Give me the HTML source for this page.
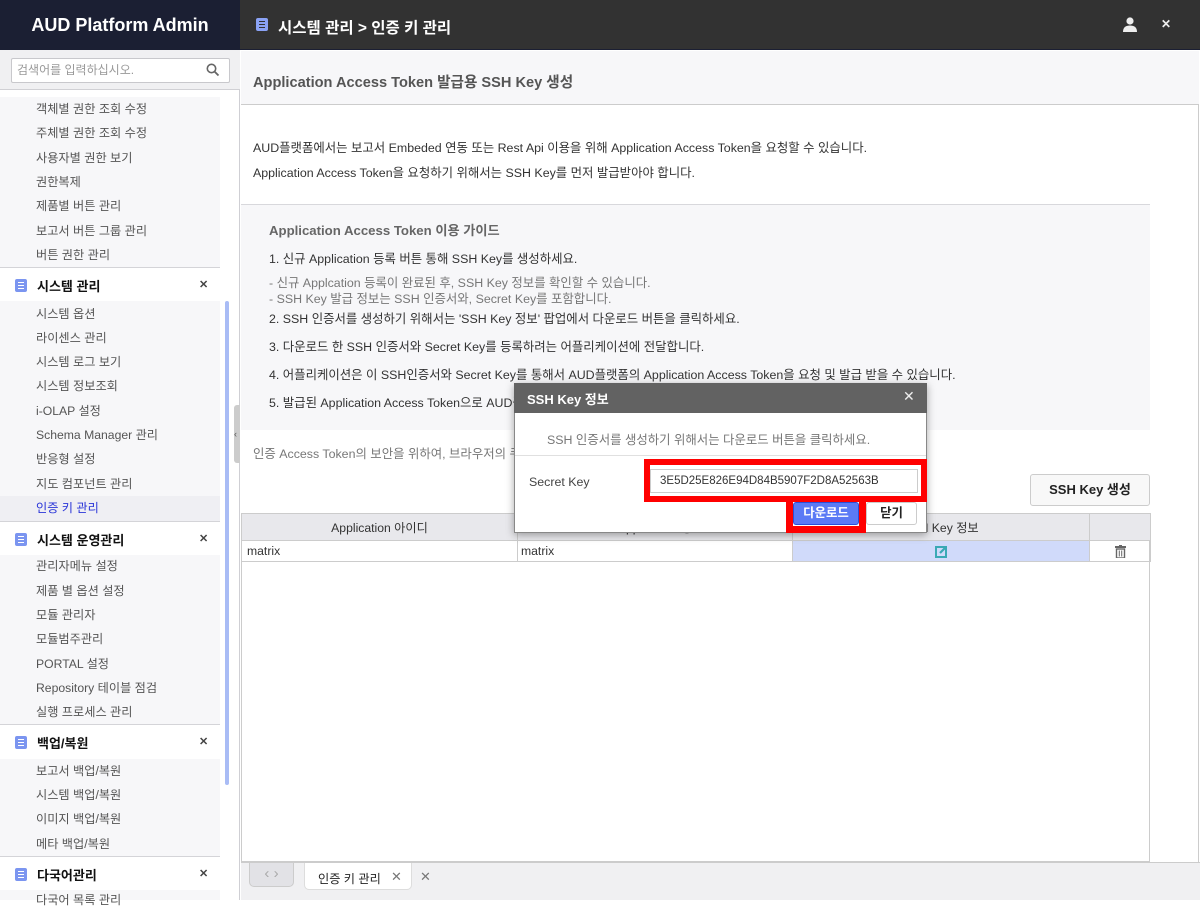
<!DOCTYPE html>
<html><head><meta charset="utf-8">
<style>
*{box-sizing:border-box;margin:0;padding:0}
body{width:1200px;height:900px;overflow:hidden;font-family:"Liberation Sans","Noto Sans CJK KR",sans-serif;font-size:12.4px;color:#333;background:#fff;position:relative}
.a{position:absolute;white-space:nowrap}
.side{position:absolute;left:0;top:0;width:240px;height:900px;background:#fff;border-right:1px solid #cfcfd4}
.sub{position:absolute;left:0;width:220px;background:#f7f7f9}
.it{position:absolute;left:36px;font-size:12.2px;color:#555;line-height:14px}
.gh{position:absolute;left:0;width:220px;height:34px;background:#fff;border-top:1px solid #d4d4d8}
.gh .ic{position:absolute;left:15px;top:11px;width:12px;height:13px;background:#7b95f0;border-radius:2px}
.gh .ic:before{content:"";position:absolute;left:3px;top:3px;width:6px;height:1px;background:#fff;box-shadow:0 3px 0 #fff,0 6px 0 #fff}
.gh b{position:absolute;left:37px;top:8px;font-size:13px;color:#111}
.gh .x{position:absolute;left:199px;top:10px;font-size:11px;color:#444;font-weight:bold}
.g{font-size:12.4px;color:#333}
th,td{border:1px solid #ccc;font-weight:normal;font-size:12.2px}
</style></head><body>

<!-- sidebar -->
<div class="side">
 <div class="a" style="left:0;top:0;width:240px;height:50px;background:#1b1f33;color:#fff;font-size:18px;font-weight:bold;text-align:center;line-height:50px">AUD Platform Admin</div>
 <div class="a" style="left:0;top:50px;width:240px;height:40px;background:#f0f0f2;border-bottom:1px solid #d0d0d4"></div>
 <div class="a" style="left:11px;top:58px;width:219px;height:25px;background:#fff;border:1px solid #c8c8cc;border-radius:2px;font-size:12px;color:#999;padding:5px 5px;line-height:13px">검색어를 입력하십시오.</div>
 <svg class="a" style="left:206px;top:63px" width="14" height="14" viewBox="0 0 14 14"><circle cx="5.5" cy="5.5" r="4.2" fill="none" stroke="#666" stroke-width="1.6"/><path d="M8.6 8.6L12.5 12.5" stroke="#666" stroke-width="1.8"/></svg>

 <div class="sub" style="top:97px;height:170px"></div>
 <div class="it" style="top:102px">객체별 권한 조회 수정</div>
 <div class="it" style="top:126px">주체별 권한 조회 수정</div>
 <div class="it" style="top:151px">사용자별 권한 보기</div>
 <div class="it" style="top:175px">권한복제</div>
 <div class="it" style="top:199px">제품별 버튼 관리</div>
 <div class="it" style="top:224px">보고서 버튼 그룹 관리</div>
 <div class="it" style="top:248px">버튼 권한 관리</div>

 <div class="gh" style="top:267px"><span class="ic"></span><b>시스템 관리</b><span class="x">✕</span></div>
 <div class="sub" style="top:301px;height:220px"></div>
 <div class="sub" style="top:496px;height:25px;background:#efeff3"></div>
 <div class="it" style="top:307px">시스템 옵션</div>
 <div class="it" style="top:331px">라이센스 관리</div>
 <div class="it" style="top:355px">시스템 로그 보기</div>
 <div class="it" style="top:379px">시스템 정보조회</div>
 <div class="it" style="top:404px">i-OLAP 설정</div>
 <div class="it" style="top:428px">Schema Manager 관리</div>
 <div class="it" style="top:452px">반응형 설정</div>
 <div class="it" style="top:477px">지도 컴포넌트 관리</div>
 <div class="it" style="top:501px;color:#2a35d8">인증 키 관리</div>

 <div class="gh" style="top:521px"><span class="ic"></span><b>시스템 운영관리</b><span class="x">✕</span></div>
 <div class="sub" style="top:555px;height:170px"></div>
 <div class="it" style="top:559px">관리자메뉴 설정</div>
 <div class="it" style="top:584px">제품 별 옵션 설정</div>
 <div class="it" style="top:608px">모듈 관리자</div>
 <div class="it" style="top:632px">모듈범주관리</div>
 <div class="it" style="top:657px">PORTAL 설정</div>
 <div class="it" style="top:681px">Repository 테이블 점검</div>
 <div class="it" style="top:705px">실행 프로세스 관리</div>

 <div class="gh" style="top:724px"><span class="ic"></span><b>백업/복원</b><span class="x">✕</span></div>
 <div class="sub" style="top:759px;height:97px"></div>
 <div class="it" style="top:764px">보고서 백업/복원</div>
 <div class="it" style="top:788px">시스템 백업/복원</div>
 <div class="it" style="top:812px">이미지 백업/복원</div>
 <div class="it" style="top:837px">메타 백업/복원</div>

 <div class="gh" style="top:856px"><span class="ic"></span><b>다국어관리</b><span class="x">✕</span></div>
 <div class="sub" style="top:890px;height:10px"></div>
 <div class="it" style="top:893px">다국어 목록 관리</div>

 <div class="a" style="left:225px;top:301px;width:4px;height:484px;background:#a9bcf5;border-radius:2px"></div>
 <div class="a" style="left:234px;top:405px;width:6px;height:58px;background:#ccc;border-radius:3px 0 0 3px;font-size:9px;color:#555;line-height:58px">‹</div>
</div>

<!-- top header -->
<div class="a" style="left:240px;top:0;width:960px;height:50px;background:#323232;border-bottom:1px solid #1b1f33"></div>
<div class="a" style="left:256px;top:18px;width:12px;height:13px;background:#8aa2f5;border-radius:2px"></div>
<div class="a" style="left:259px;top:21px;width:6px;height:1px;background:#323232;box-shadow:0 3px 0 #323232,0 6px 0 #323232"></div>
<div class="a" style="left:278px;top:16px;color:#fff;font-size:15.5px;font-weight:bold">시스템 관리 &gt; 인증 키 관리</div>
<svg class="a" style="left:1122px;top:17px" width="16" height="15" viewBox="0 0 16 15"><circle cx="8" cy="4" r="3.6" fill="#eee"/><path d="M1 15C1 10 4 8.5 8 8.5S15 10 15 15Z" fill="#eee"/></svg>
<div class="a" style="left:1161px;top:17px;color:#eee;font-size:12px;font-weight:bold">✕</div>

<!-- title band -->
<div class="a" style="left:241px;top:51px;width:958px;height:54px;background:#f7f7f9;border-bottom:1px solid #ccc"></div>
<div class="a" style="left:253px;top:71px;font-size:14.6px;font-weight:bold;color:#555">Application Access Token 발급용 SSH Key 생성</div>
<div class="a" style="left:1198px;top:105px;width:1px;height:757px;background:#ccc"></div>

<div class="a g" style="left:253px;top:138px">AUD플랫폼에서는 보고서 Embeded 연동 또는 Rest Api 이용을 위해 Application Access Token을 요청할 수 있습니다.</div>
<div class="a g" style="left:253px;top:163px">Application Access Token을 요청하기 위해서는 SSH Key를 먼저 발급받아야 합니다.</div>

<!-- guide -->
<div class="a" style="left:241px;top:204px;width:909px;height:226px;background:#f7f7f9;border-top:1px solid #d8d8dc"></div>
<div class="a" style="left:269px;top:220px;font-size:13.2px;font-weight:bold;color:#666">Application Access Token 이용 가이드</div>
<div class="a g" style="left:269px;top:249px">1. 신규 Application 등록 버튼 통해 SSH Key를 생성하세요.</div>
<div class="a" style="left:269px;top:273px;color:#777">- 신규 Applcation 등록이 완료된 후, SSH Key 정보를 확인할 수 있습니다.</div>
<div class="a" style="left:269px;top:289px;color:#777">- SSH Key 발급 정보는 SSH 인증서와, Secret Key를 포함합니다.</div>
<div class="a g" style="left:269px;top:309px">2. SSH 인증서를 생성하기 위해서는 'SSH Key 정보' 팝업에서 다운로드 버튼을 클릭하세요.</div>
<div class="a g" style="left:269px;top:337px">3. 다운로드 한 SSH 인증서와 Secret Key를 등록하려는 어플리케이션에 전달합니다.</div>
<div class="a g" style="left:269px;top:365px">4. 어플리케이션은 이 SSH인증서와 Secret Key를 통해서 AUD플랫폼의 Application Access Token을 요청 및 발급 받을 수 있습니다.</div>
<div class="a g" style="left:269px;top:393px">5. 발급된 Application Access Token으로 AUD플랫폼에 접근할 수 있습니다.</div>

<div class="a" style="left:253px;top:444px;color:#777">인증 Access Token의 보안을 위하여, 브라우저의 쿠키 정보를 확인하세요.</div>

<div class="a" style="left:1030px;top:474px;width:120px;height:32px;border:1px solid #ccc;border-radius:3px;background:#f8f8f8;font-size:13px;font-weight:bold;text-align:center;line-height:30px;color:#222">SSH Key 생성</div>

<!-- table -->
<div class="a" style="left:241px;top:513px;width:909px;height:349px;border:1px solid #ccc;background:#fff"></div>
<table class="a" style="left:241px;top:513px;width:909px;border-collapse:collapse;table-layout:fixed">
<tr style="height:27px;background:#e8e8ec;color:#333"><th style="width:276px">Application 아이디</th><th style="width:275px">Application 명</th><th style="width:297px">SSH Key 정보</th><th style="width:61px"></th></tr>
<tr style="height:21px"><td style="padding-left:5px">matrix</td><td style="padding-left:3px">matrix</td><td style="background:#d0dafa;text-align:center"><svg width="13" height="13" viewBox="0 0 13 13" style="vertical-align:middle"><rect x="1" y="2" width="10" height="10" fill="none" stroke="#3aa9b5" stroke-width="2"/><path d="M5 8L11 2" stroke="#3aa9b5" stroke-width="2.2"/></svg></td><td style="text-align:center"><svg width="11" height="13" viewBox="0 0 11 13" style="vertical-align:middle"><rect x="0" y="1" width="11" height="2" fill="#666"/><rect x="4" y="0" width="3" height="1" fill="#666"/><rect x="1.5" y="4" width="8" height="9" fill="none" stroke="#666" stroke-width="1.4"/><path d="M4.3 5.5V11.5M6.7 5.5V11.5" stroke="#666"/></svg></td></tr>
</table>

<!-- bottom tabs -->
<div class="a" style="left:241px;top:862px;width:959px;height:38px;background:#f0f0f2;border-top:1px solid #ccc"></div>
<div class="a" style="left:249px;top:863px;width:45px;height:24px;background:#e2e2e6;border:1px solid #ccc;border-top:none;border-radius:0 0 5px 5px;color:#aaa;text-align:center;line-height:22px;font-size:15px">‹ ›</div>
<div class="a" style="left:304px;top:863px;width:108px;height:27px;background:#fff;border:1px solid #ddd;border-top:none;border-radius:0 0 5px 5px"></div>
<div class="a" style="left:318px;top:869px;font-size:12.2px;color:#222">인증 키 관리</div>
<div class="a" style="left:391px;top:869px;font-size:13px;color:#777">✕</div>
<div class="a" style="left:420px;top:869px;font-size:13px;color:#777">✕</div>

<!-- modal -->
<div class="a" style="left:514px;top:383px;width:413px;height:150px;background:#fff;border:1px solid #888;box-shadow:0 2px 8px rgba(0,0,0,.35)"></div>
<div class="a" style="left:514px;top:383px;width:413px;height:30px;background:#626262"></div>
<div class="a" style="left:527px;top:389px;color:#fff;font-size:13px;font-weight:bold">SSH Key 정보</div>
<div class="a" style="left:903px;top:388px;color:#eee;font-size:14px">✕</div>
<div class="a" style="left:547px;top:430px;color:#777">SSH 인증서를 생성하기 위해서는 다운로드 버튼을 클릭하세요.</div>
<div class="a" style="left:515px;top:455px;width:411px;height:1px;background:#e0e0e0"></div>
<div class="a" style="left:529px;top:475px;color:#444">Secret Key</div>
<div class="a" style="left:644px;top:459px;width:283px;height:43px;border:6px solid #f00"></div>
<div class="a" style="left:650px;top:469px;width:268px;height:24px;border:1px solid #ccc;background:#fff;padding-left:9px;line-height:22px;color:#333;font-size:11.5px">3E5D25E826E94D84B5907F2D8A52563B</div>
<div class="a" style="left:786px;top:501px;width:80px;height:32px;border:7px solid #f00;border-top:none"></div>
<div class="a" style="left:793px;top:502px;width:66px;height:23px;background:#5b7af5;border:1px solid #2b4fd8;border-radius:3px;color:#fff;text-align:center;line-height:21px;font-weight:bold">다운로드</div>
<div class="a" style="left:866px;top:502px;width:51px;height:23px;background:#fff;border:1px solid #ccc;border-radius:3px;color:#222;text-align:center;line-height:21px;font-weight:bold">닫기</div>
</body></html>
